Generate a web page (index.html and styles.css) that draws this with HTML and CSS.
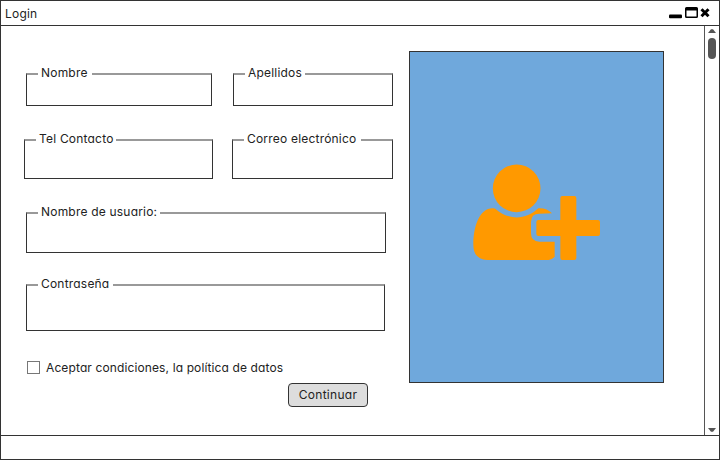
FILE: index.html
```html
<!DOCTYPE html>
<html lang="es">
<head>
<meta charset="utf-8">
<title>Login</title>
<link rel="stylesheet" href="styles.css">
</head>
<body>
<div class="window">
  <header class="titlebar">
    <span class="title">Login</span>
    <svg class="controls" width="42" height="12" viewBox="0 0 42 12">
      <rect x="0" y="7.500" width="13" height="3.700" rx="1"/>
      <path d="M17.500 0h10a1.500 1.500 0 0 1 1.500 1.500v8a1.500 1.500 0 0 1-1.500 1.500h-10a1.500 1.500 0 0 1-1.500-1.500v-8a1.500 1.500 0 0 1 1.500-1.500zM17.500 3.500v6h10v-6z" fill-rule="evenodd"/>
      <path d="M32.500 2.300l7 7M39.500 2.300l-7 7" stroke="#000" stroke-width="3"/>
    </svg>
  </header>
  <div class="body">
    <main class="content">
      <form class="form">
        <div class="row names">
          <fieldset class="field nombre"><legend><span>Nombre</span></legend></fieldset>
          <fieldset class="field apellidos"><legend><span>Apellidos</span></legend></fieldset>
        </div>
        <div class="row contact">
          <fieldset class="field telefono"><legend><span>Tel Contacto</span></legend></fieldset>
          <fieldset class="field correo"><legend><span>Correo electrónico</span></legend></fieldset>
        </div>
        <fieldset class="field usuario"><legend><span>Nombre de usuario:</span></legend></fieldset>
        <fieldset class="field clave"><legend><span>Contraseña</span></legend></fieldset>
        <div class="terms"><span class="checkbox"></span><span class="terms-text">Aceptar condiciones, la política de datos</span></div>
        <button class="submit" type="button">Continuar</button>
      </form>
      <div class="picture">
        <svg class="user" width="150" height="125" viewBox="0 0 450 375" fill="#f90">
          <circle cx="170" cy="115" r="71.500"/>
          <path d="M106 176C143 211 198 211 235 175C252 174 266 180 276 190L238 191Q213 191 213 216V250Q213 275 238 275H284V320Q275 330 258 330H82Q40 328 40 285C40 230 58 175 98 175Q103 174 106 176Z"/>
          <path d="M307 138H343Q349 138 349 144V210H414Q420 210 420 216V252Q420 258 414 258H349V324Q349 330 343 330H307Q301 330 301 324V258H235Q229 258 229 252V216Q229 210 235 210H301V144Q301 138 307 138Z"/>
        </svg>
      </div>
    </main>
    <aside class="scrollbar">
      <svg width="8" height="4" viewBox="0 0 8 4"><path d="M0 4L3 .3H5L8 4Z" fill="#555"/></svg>
      <span class="thumb"></span>
      <svg class="down" width="8" height="4" viewBox="0 0 8 4"><path d="M0 0L3 3.700H5L8 0Z" fill="#555"/></svg>
    </aside>
  </div>
  <footer class="statusbar"></footer>
</div>
</body>
</html>
```

FILE: styles.css
```css
* { box-sizing: border-box; }
body {
  margin: 0;
  background: #fff;
  color: #222;
  font: 400 12px/16px Inter, "Liberation Sans", sans-serif;
  font-feature-settings: "cv11";
}
.window {
  width: 720px;
  height: 460px;
  border: 1px solid #333;
  display: flex;
  flex-direction: column;
}
.titlebar {
  height: 25px;
  border-bottom: 1px solid #333;
  padding: 0 8px 0 4px;
  display: flex;
  justify-content: space-between;
  align-items: flex-start;
}
.title { margin-top: 5px; letter-spacing: .2px; }
.controls { margin-top: 6px; }
.body { height: 409px; display: flex; }
.content { flex: 1; display: flex; align-items: flex-start; }
.form { width: 408px; padding-top: 40px; }
.row { display: flex; }
.field {
  min-width: 0;
  margin: 0;
  padding: 0 0 0 11px;
  border: 1px solid #333;
  border-top: 2px solid #999;
}
.field legend {
  height: 16px;
  padding: 0 0 0 3px;
  line-height: 14px;
  letter-spacing: .2px;
  white-space: nowrap;
}
.names { padding-left: 25px; gap: 21px; height: 40px; }
.contact { padding-left: 23px; gap: 19px; height: 47px; margin-top: 26px; }
.nombre { width: 186px; }
.nombre legend { width: 54px; }
.apellidos { width: 160px; }
.apellidos legend { width: 60px; }
.telefono { width: 189px; }
.telefono legend { width: 80px; }
.correo { width: 161px; }
.correo legend { width: 117px; }
.usuario { width: 360px; height: 48px; margin: 26px 0 0 25px; }
.usuario legend { width: 122px; }
.clave { width: 359px; height: 54px; margin: 24px 0 0 25px; }
.clave legend { width: 75px; }
.terms { display: flex; align-items: center; height: 16px; margin: 28px 0 0 26px; }
.checkbox { width: 13px; height: 13px; border: 1px solid #777; margin-right: 6px; }
.terms-text { padding-top: 2px; letter-spacing: .12px; white-space: nowrap; }
.submit {
  display: block;
  width: 80px;
  height: 24px;
  margin: 8px 0 0 287px;
  padding: 0;
  border: 1px solid #333;
  border-radius: 4px;
  background: #ddd;
  color: #222;
  font: inherit;
  font-feature-settings: inherit;
  letter-spacing: .28px;
}
.picture {
  width: 255px;
  height: 332px;
  margin-top: 25px;
  border: 1px solid #333;
  background: #6fa8dc;
}
.user { display: block; margin: 98px 0 0 50px; }
.scrollbar {
  width: 15px;
  border-left: 1px solid #555;
  display: flex;
  flex-direction: column;
  align-items: center;
  padding: 3px 0 3px;
}
.thumb { width: 8px; height: 21px; margin-top: 5px; border-radius: 4px; background: #555; }
.down { margin-top: auto; }
.statusbar { flex: 1; border-top: 1px solid #333; }
```
